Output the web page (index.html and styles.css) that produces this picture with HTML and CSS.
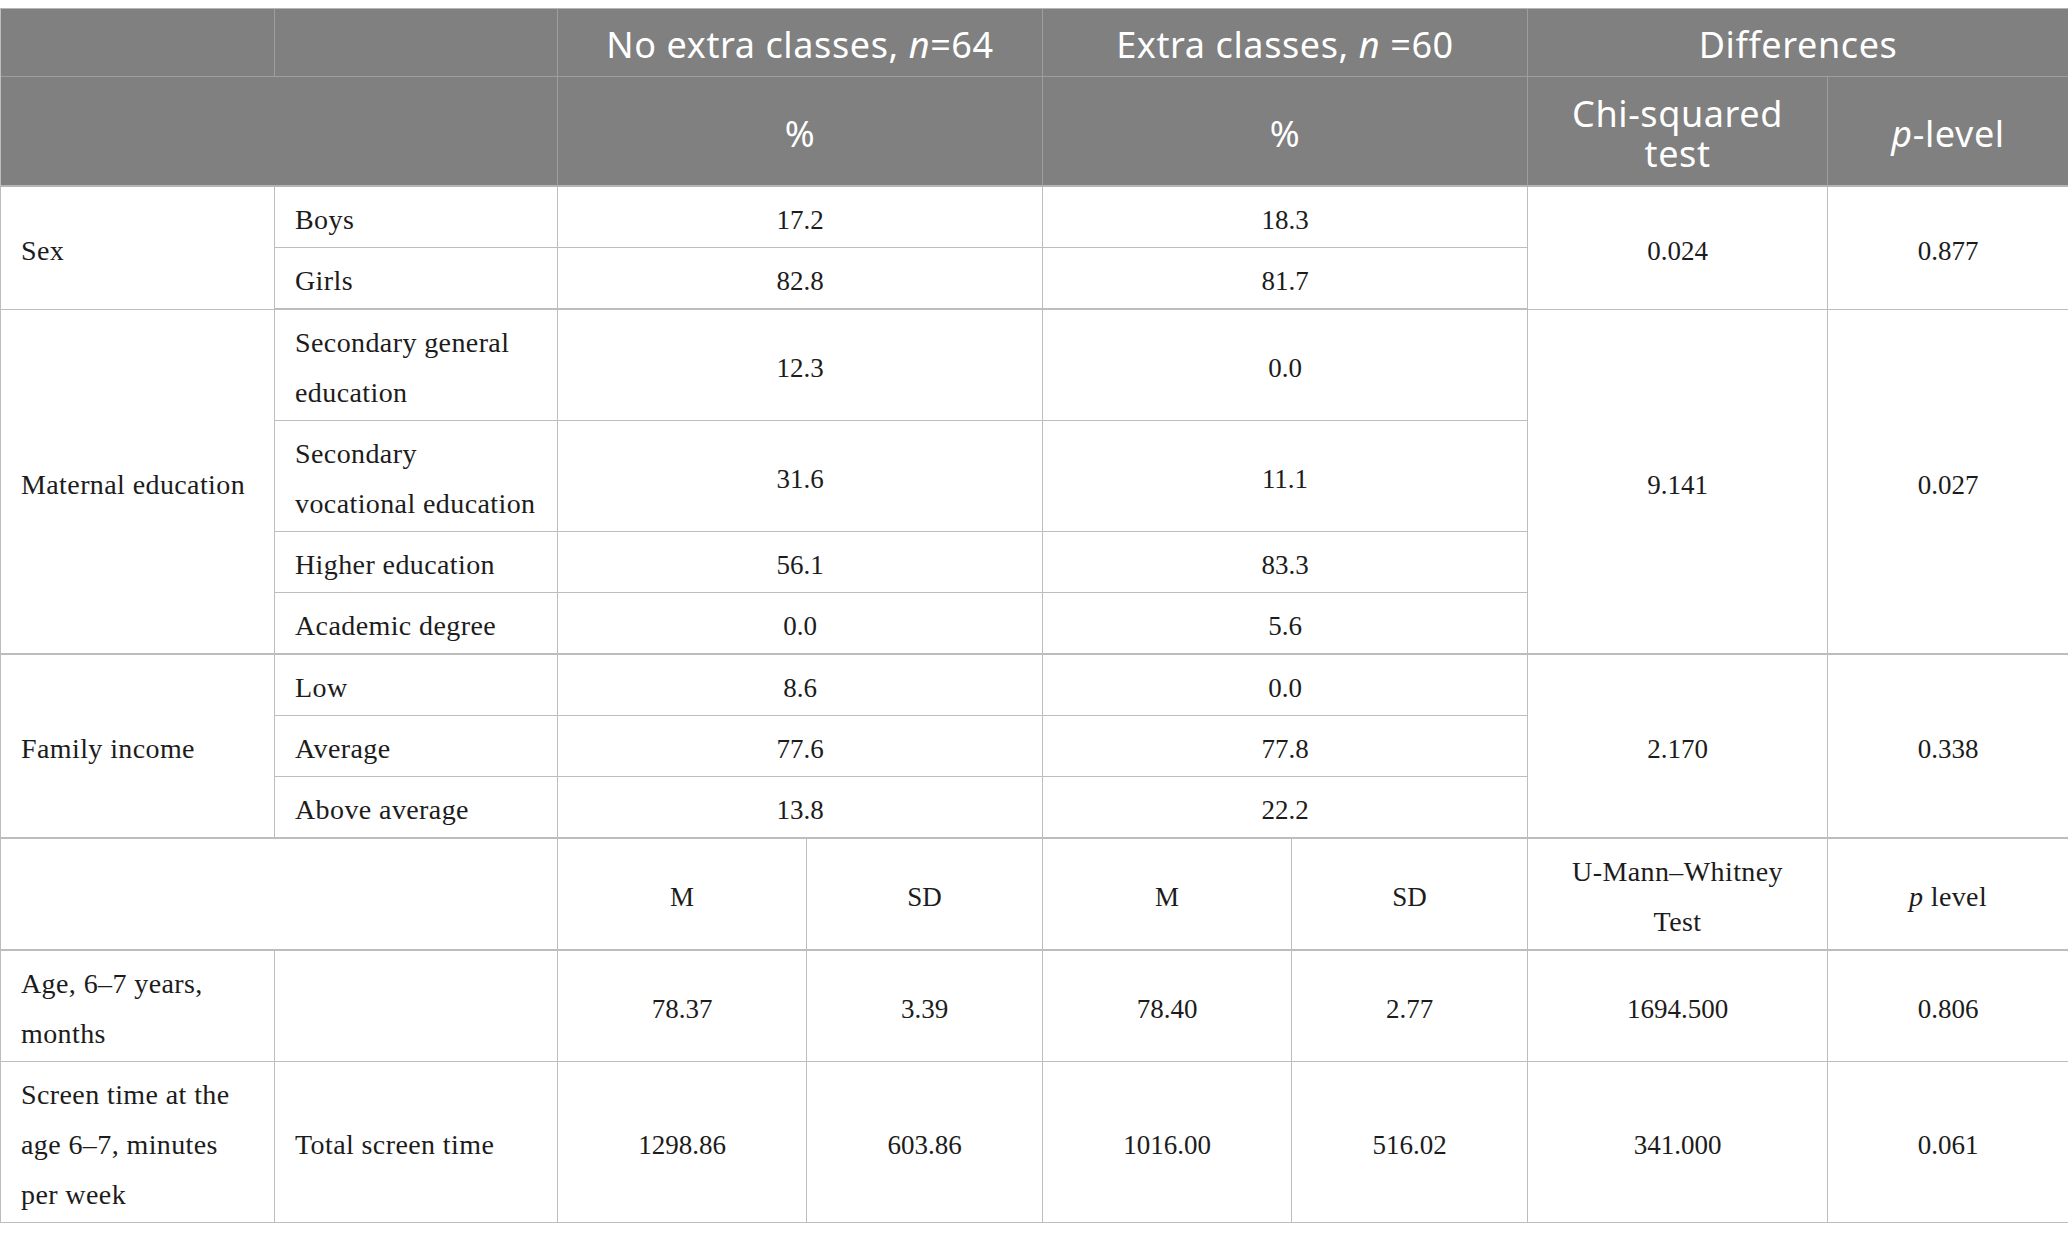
FILE: index.html
```html
<!DOCTYPE html>
<html lang="en">
<head>
<meta charset="utf-8">
<title>Table</title>
<link rel="stylesheet" href="styles.css">
</head>
<body>
<table class="data">
  <colgroup>
    <col class="c1"><col class="c2"><col class="c3a"><col class="c3b"><col class="c4a"><col class="c4b"><col class="c5"><col class="c6">
  </colgroup>
  <thead>
    <tr class="h1">
      <th></th>
      <th></th>
      <th colspan="2">No extra classes, <i>n</i>=64</th>
      <th colspan="2">Extra classes, <i>n</i> =60</th>
      <th colspan="2" class="last">Differences</th>
    </tr>
    <tr class="h2">
      <th colspan="2"></th>
      <th colspan="2">%</th>
      <th colspan="2">%</th>
      <th><span class="hl">Chi-squared</span><span class="hl">test</span></th>
      <th class="last"><i>p</i>-level</th>
    </tr>
  </thead>
  <tbody>
    <tr>
      <td rowspan="2" class="lbl">Sex</td>
      <td class="lbl">Boys</td>
      <td colspan="2" class="num">17.2</td>
      <td colspan="2" class="num">18.3</td>
      <td rowspan="2" class="num">0.024</td>
      <td rowspan="2" class="num">0.877</td>
    </tr>
    <tr class="grp-end">
      <td class="lbl">Girls</td>
      <td colspan="2" class="num">82.8</td>
      <td colspan="2" class="num">81.7</td>
    </tr>
    <tr>
      <td rowspan="4" class="lbl grp-cell">Maternal education</td>
      <td class="lbl">Secondary general<br>education</td>
      <td colspan="2" class="num">12.3</td>
      <td colspan="2" class="num">0.0</td>
      <td rowspan="4" class="num grp-cell">9.141</td>
      <td rowspan="4" class="num grp-cell">0.027</td>
    </tr>
    <tr>
      <td class="lbl">Secondary<br>vocational education</td>
      <td colspan="2" class="num">31.6</td>
      <td colspan="2" class="num">11.1</td>
    </tr>
    <tr>
      <td class="lbl">Higher education</td>
      <td colspan="2" class="num">56.1</td>
      <td colspan="2" class="num">83.3</td>
    </tr>
    <tr class="grp-end">
      <td class="lbl">Academic degree</td>
      <td colspan="2" class="num">0.0</td>
      <td colspan="2" class="num">5.6</td>
    </tr>
    <tr>
      <td rowspan="3" class="lbl grp-cell">Family income</td>
      <td class="lbl">Low</td>
      <td colspan="2" class="num">8.6</td>
      <td colspan="2" class="num">0.0</td>
      <td rowspan="3" class="num grp-cell">2.170</td>
      <td rowspan="3" class="num grp-cell">0.338</td>
    </tr>
    <tr>
      <td class="lbl">Average</td>
      <td colspan="2" class="num">77.6</td>
      <td colspan="2" class="num">77.8</td>
    </tr>
    <tr class="grp-end">
      <td class="lbl">Above average</td>
      <td colspan="2" class="num">13.8</td>
      <td colspan="2" class="num">22.2</td>
    </tr>
    <tr class="grp-end">
      <td colspan="2" class="lbl"><br><br></td>
      <td class="num">M</td>
      <td class="num">SD</td>
      <td class="num">M</td>
      <td class="num">SD</td>
      <td class="lbl center">U-Mann–Whitney<br>Test</td>
      <td class="lbl center"><i>p</i> level</td>
    </tr>
    <tr>
      <td class="lbl">Age, 6–7 years,<br>months</td>
      <td class="lbl"></td>
      <td class="num">78.37</td>
      <td class="num">3.39</td>
      <td class="num">78.40</td>
      <td class="num">2.77</td>
      <td class="num">1694.500</td>
      <td class="num">0.806</td>
    </tr>
    <tr>
      <td class="lbl">Screen time at the<br>age 6–7, minutes<br>per week</td>
      <td class="lbl">Total screen time</td>
      <td class="num">1298.86</td>
      <td class="num">603.86</td>
      <td class="num">1016.00</td>
      <td class="num">516.02</td>
      <td class="num">341.000</td>
      <td class="num">0.061</td>
    </tr>
  </tbody>
</table>
</body>
</html>
```

FILE: styles.css
```css
html, body {
  margin: 0;
  padding: 0;
  background: #ffffff;
}

body {
  padding-top: 8px;
}

.data {
  width: 2068px;
  table-layout: fixed;
  border-collapse: separate;
  border-spacing: 0;
  border-top: 1px solid #b5b5b5;
  border-left: 1px solid #bdbdbd;
}

.c1 { width: 274px; }
.c2 { width: 283px; }
.c3a { width: 249px; }
.c3b { width: 236px; }
.c4a { width: 249px; }
.c4b { width: 236px; }
.c5 { width: 300px; }
.c6 { width: 241px; }

.data th {
  background: #7f807f;
  color: #ffffff;
  font-family: "Noto Sans", "Open Sans", sans-serif;
  font-weight: 400;
  font-size: 36px;
  letter-spacing: 0.6px;
  line-height: 40px;
  text-align: center;
  vertical-align: middle;
  border-right: 1px solid #9d9e9d;
  border-bottom: 1px solid #9d9e9d;
  padding: 5px 10px 0;
}

.data th.last {
  border-right-color: #b5b5b5;
}

.data th i {
  font-style: italic;
}

.hl {
  display: block;
  height: 40px;
  line-height: 40px;
  overflow: visible;
}

.h1 th {
  height: 62px;
}

.h2 th {
  height: 103px;
  border-bottom: 2px solid #b5b5b5;
}

.data td {
  font-family: "Liberation Serif", "Times New Roman", serif;
  color: #1c1c1c;
  line-height: 50px;
  padding: 8px 20px 2px;
  vertical-align: middle;
  border-right: 1px solid #bdbdbd;
  border-bottom: 1px solid #bdbdbd;
}

.data td.lbl {
  font-size: 28px;
  letter-spacing: 0.4px;
  text-align: left;
}

.data td.lbl.center {
  text-align: center;
  padding-left: 10px;
  padding-right: 10px;
}

.data td.num {
  font-size: 27px;
  text-align: center;
  padding-left: 10px;
  padding-right: 10px;
}

.grp-end td,
.data td.grp-cell {
  border-bottom-width: 2px;
}
```
